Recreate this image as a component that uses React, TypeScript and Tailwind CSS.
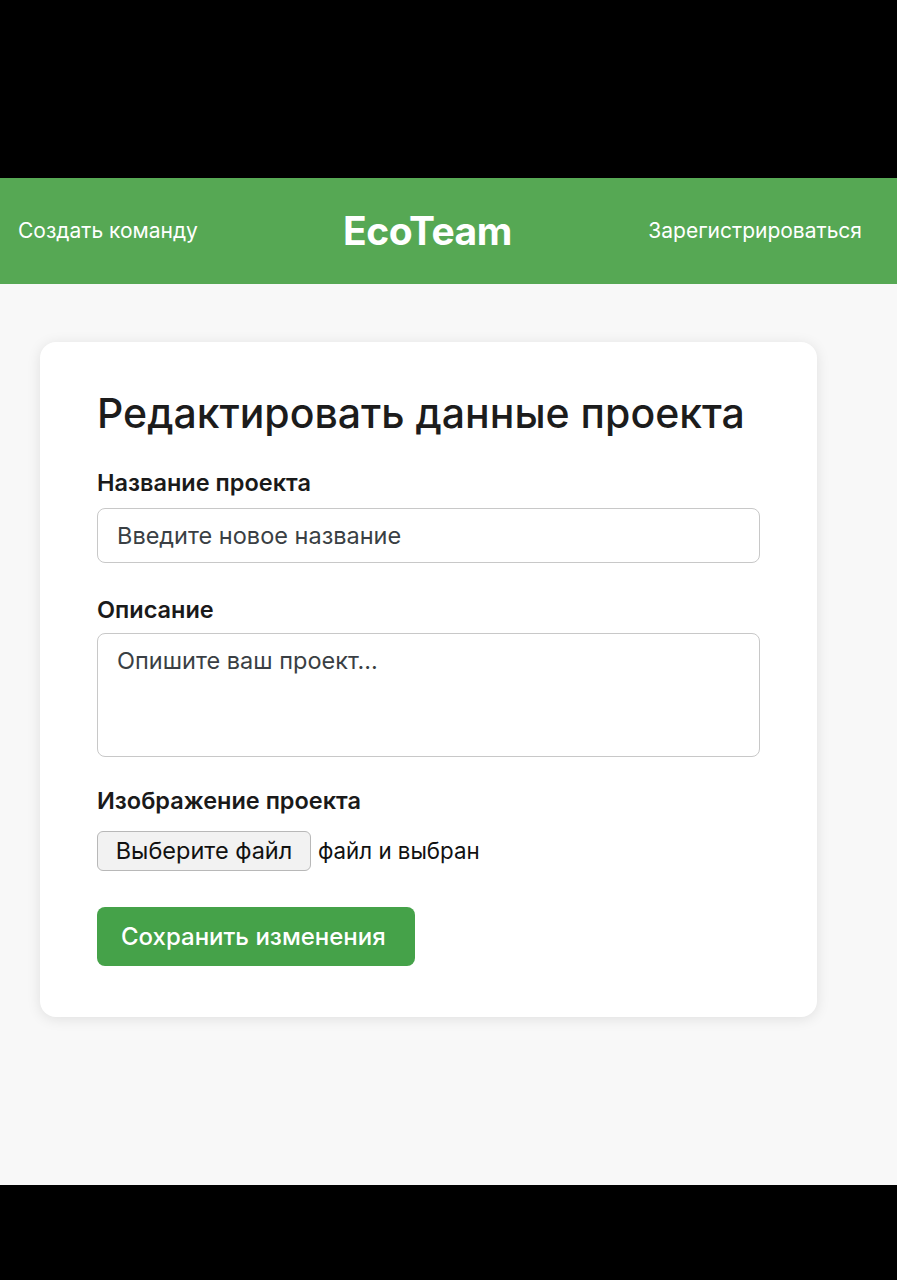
import React from "react";

export default function App() {
  const font = { fontFamily: 'Inter, "Liberation Sans", Arial, sans-serif' };
  return (
    <div className="w-[897px] h-[1280px] bg-black flex flex-col" style={font}>
      <div className="h-[178px] bg-black" />
      <header className="h-[106px] bg-[#56a854] flex items-center pl-[18px] pr-[35px] text-white">
        <a className="text-[21px] w-[325px] whitespace-nowrap">Создать команду</a>
        <div className="text-[39px] font-bold tracking-[-0.5px]">EcoTeam</div>
        <div className="flex-1" />
        <a className="text-[21px] whitespace-nowrap">Зарегистрироваться</a>
      </header>
      <main className="h-[901px] bg-[#f8f8f8] pt-[58px]">
        <div className="ml-[40px] w-[777px] bg-white rounded-[16px] shadow-[0_2px_14px_rgba(0,0,0,0.10)] pl-[57px] pr-[57px] pt-[48px] pb-[51px]">
          <h1 className="text-[41px] font-medium text-[#1c1c1c] leading-[46px] whitespace-nowrap">Редактировать данные проекта</h1>
          <div className="mt-[32px] text-[23.5px] font-semibold text-[#1a1a1a] leading-[30px] whitespace-nowrap">Название проекта</div>
          <div className="mt-[10px] h-[55px] w-[663px] border border-[#c8c8c8] rounded-[8px] flex items-center px-[19px] text-[23.5px] text-[#3a3f44]">
            Введите новое название
          </div>
          <div className="mt-[32px] text-[23.5px] font-semibold text-[#1a1a1a] leading-[30px]">Описание</div>
          <div className="mt-[8px] h-[124px] w-[663px] border border-[#c8c8c8] rounded-[8px] px-[19px] pt-[12px] text-[23.5px] text-[#3a3f44] leading-[30px]">
            Опишите ваш проект...
          </div>
          <div className="mt-[29px] text-[23.5px] font-semibold text-[#1a1a1a] leading-[30px] whitespace-nowrap">Изображение проекта</div>
          <div className="mt-[15px] flex items-center">
            <div className="h-[40px] w-[214px] bg-[#f2f2f2] border border-[#b8b8b8] rounded-[6px] flex items-center justify-center text-[23.5px] text-[#111] whitespace-nowrap">
              Выберите файл
            </div>
            <span className="ml-[7px] text-[22.3px] text-[#111] whitespace-nowrap">файл и выбран</span>
          </div>
          <button className="mt-[36px] h-[59px] w-[318px] bg-[#45a249] rounded-[8px] text-white text-[24px] font-medium flex items-center px-[24px] whitespace-nowrap" style={font}>
            Сохранить изменения
          </button>
        </div>
      </main>
      <div className="flex-1 bg-black" />
    </div>
  );
}
